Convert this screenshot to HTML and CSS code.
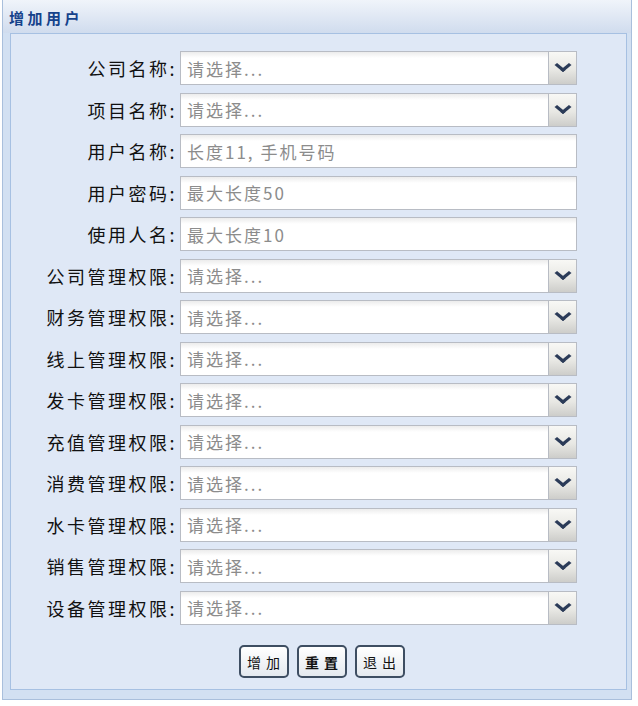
FILE: index.html
```html
<!DOCTYPE html>
<html lang="zh-CN">
<head>
    <meta charset="UTF-8">
    <title>增加用户</title>
    <link rel="stylesheet" href="styles.css">
</head>
<body>
    <div class="window">
        <div class="window-header">增加用户</div>
        <div class="window-body">
            <form class="user-form">
                <div class="form-row">
                    <label class="form-label">公司名称:</label>
                    <div class="field combo"><span class="placeholder">请选择...</span><span class="trigger"></span></div>
                </div>
                <div class="form-row">
                    <label class="form-label">项目名称:</label>
                    <div class="field combo"><span class="placeholder">请选择...</span><span class="trigger"></span></div>
                </div>
                <div class="form-row">
                    <label class="form-label">用户名称:</label>
                    <div class="field"><span class="placeholder">长度11, 手机号码</span></div>
                </div>
                <div class="form-row">
                    <label class="form-label">用户密码:</label>
                    <div class="field"><span class="placeholder">最大长度50</span></div>
                </div>
                <div class="form-row">
                    <label class="form-label">使用人名:</label>
                    <div class="field"><span class="placeholder">最大长度10</span></div>
                </div>
                <div class="form-row">
                    <label class="form-label">公司管理权限:</label>
                    <div class="field combo"><span class="placeholder">请选择...</span><span class="trigger"></span></div>
                </div>
                <div class="form-row">
                    <label class="form-label">财务管理权限:</label>
                    <div class="field combo"><span class="placeholder">请选择...</span><span class="trigger"></span></div>
                </div>
                <div class="form-row">
                    <label class="form-label">线上管理权限:</label>
                    <div class="field combo"><span class="placeholder">请选择...</span><span class="trigger"></span></div>
                </div>
                <div class="form-row">
                    <label class="form-label">发卡管理权限:</label>
                    <div class="field combo"><span class="placeholder">请选择...</span><span class="trigger"></span></div>
                </div>
                <div class="form-row">
                    <label class="form-label">充值管理权限:</label>
                    <div class="field combo"><span class="placeholder">请选择...</span><span class="trigger"></span></div>
                </div>
                <div class="form-row">
                    <label class="form-label">消费管理权限:</label>
                    <div class="field combo"><span class="placeholder">请选择...</span><span class="trigger"></span></div>
                </div>
                <div class="form-row">
                    <label class="form-label">水卡管理权限:</label>
                    <div class="field combo"><span class="placeholder">请选择...</span><span class="trigger"></span></div>
                </div>
                <div class="form-row">
                    <label class="form-label">销售管理权限:</label>
                    <div class="field combo"><span class="placeholder">请选择...</span><span class="trigger"></span></div>
                </div>
                <div class="form-row">
                    <label class="form-label">设备管理权限:</label>
                    <div class="field combo"><span class="placeholder">请选择...</span><span class="trigger"></span></div>
                </div>
                <div class="buttons">
                    <button type="button" class="btn">增加</button>
                    <button type="button" class="btn btn-bold">重置</button>
                    <button type="button" class="btn">退出</button>
                </div>
            </form>
        </div>
    </div>
</body>
</html>
```

FILE: styles.css
```css
body {
    margin: 0;
    padding-left: 2px;
    background-color: #ffffff;
    font-family: "Noto Sans CJK SC", "Noto Sans", sans-serif;
}

.window {
    width: 630px;
    box-sizing: border-box;
    border: 1px solid #a9bfdc;
    border-top: none;
    background-color: #d2e0f2;
    padding: 0 4px 9px 7px;
}

.window-header {
    height: 33px;
    margin: 0 -4px 0 -7px;
    padding-left: 6px;
    line-height: 35px;
    font-size: 15px;
    font-weight: bold;
    letter-spacing: 3.5px;
    color: #15428b;
    background: linear-gradient(#f0f4fa, #d0dcee);
}

.window-body {
    height: 657px;
    border: 1px solid #a6c0e2;
    background-color: #dfe8f6;
    box-sizing: border-box;
    padding-top: 17px;
}

.user-form {
    display: flex;
    flex-direction: column;
    gap: 7.5px;
}

.form-row {
    display: flex;
    align-items: center;
    height: 34px;
}

.form-label {
    width: 166px;
    padding-right: 3px;
    text-align: right;
    font-size: 18px;
    letter-spacing: 2.5px;
    color: #111111;
    white-space: nowrap;
}

.field {
    position: relative;
    width: 397px;
    height: 34px;
    box-sizing: border-box;
    border: 1px solid #b8bcc4;
    background: linear-gradient(#ececec, #ffffff 6px);
    display: flex;
    align-items: center;
    padding-left: 6px;
}

.placeholder {
    font-size: 17px;
    letter-spacing: 2px;
    color: #8c8c8c;
}

.trigger {
    position: absolute;
    top: -1px;
    right: -1px;
    width: 29px;
    height: 34px;
    box-sizing: border-box;
    border: 1px solid #b8bcc4;
    background: linear-gradient(#f8f8f5, #e8e8e4 55%, #cdcdca);
}

.trigger::after {
    content: "";
    position: absolute;
    left: 9px;
    top: 8px;
    width: 7px;
    height: 7px;
    border-right: 3px solid #2b3b58;
    border-bottom: 3px solid #2b3b58;
    transform: scaleX(1.2) rotate(45deg);
}

.buttons {
    display: flex;
    justify-content: center;
    gap: 8px;
    margin-top: 13px;
    padding-left: 6px;
}

.btn {
    width: 50px;
    height: 33px;
    border: 2px solid #3e4e62;
    border-radius: 5px;
    background: linear-gradient(#ffffff, #e4e9ef);
    font-family: "Noto Sans CJK SC", sans-serif;
    font-size: 14px;
    letter-spacing: 5px;
    padding: 0 0 0 5px;
    color: #111111;
}

.btn-bold {
    font-weight: bold;
}
```
